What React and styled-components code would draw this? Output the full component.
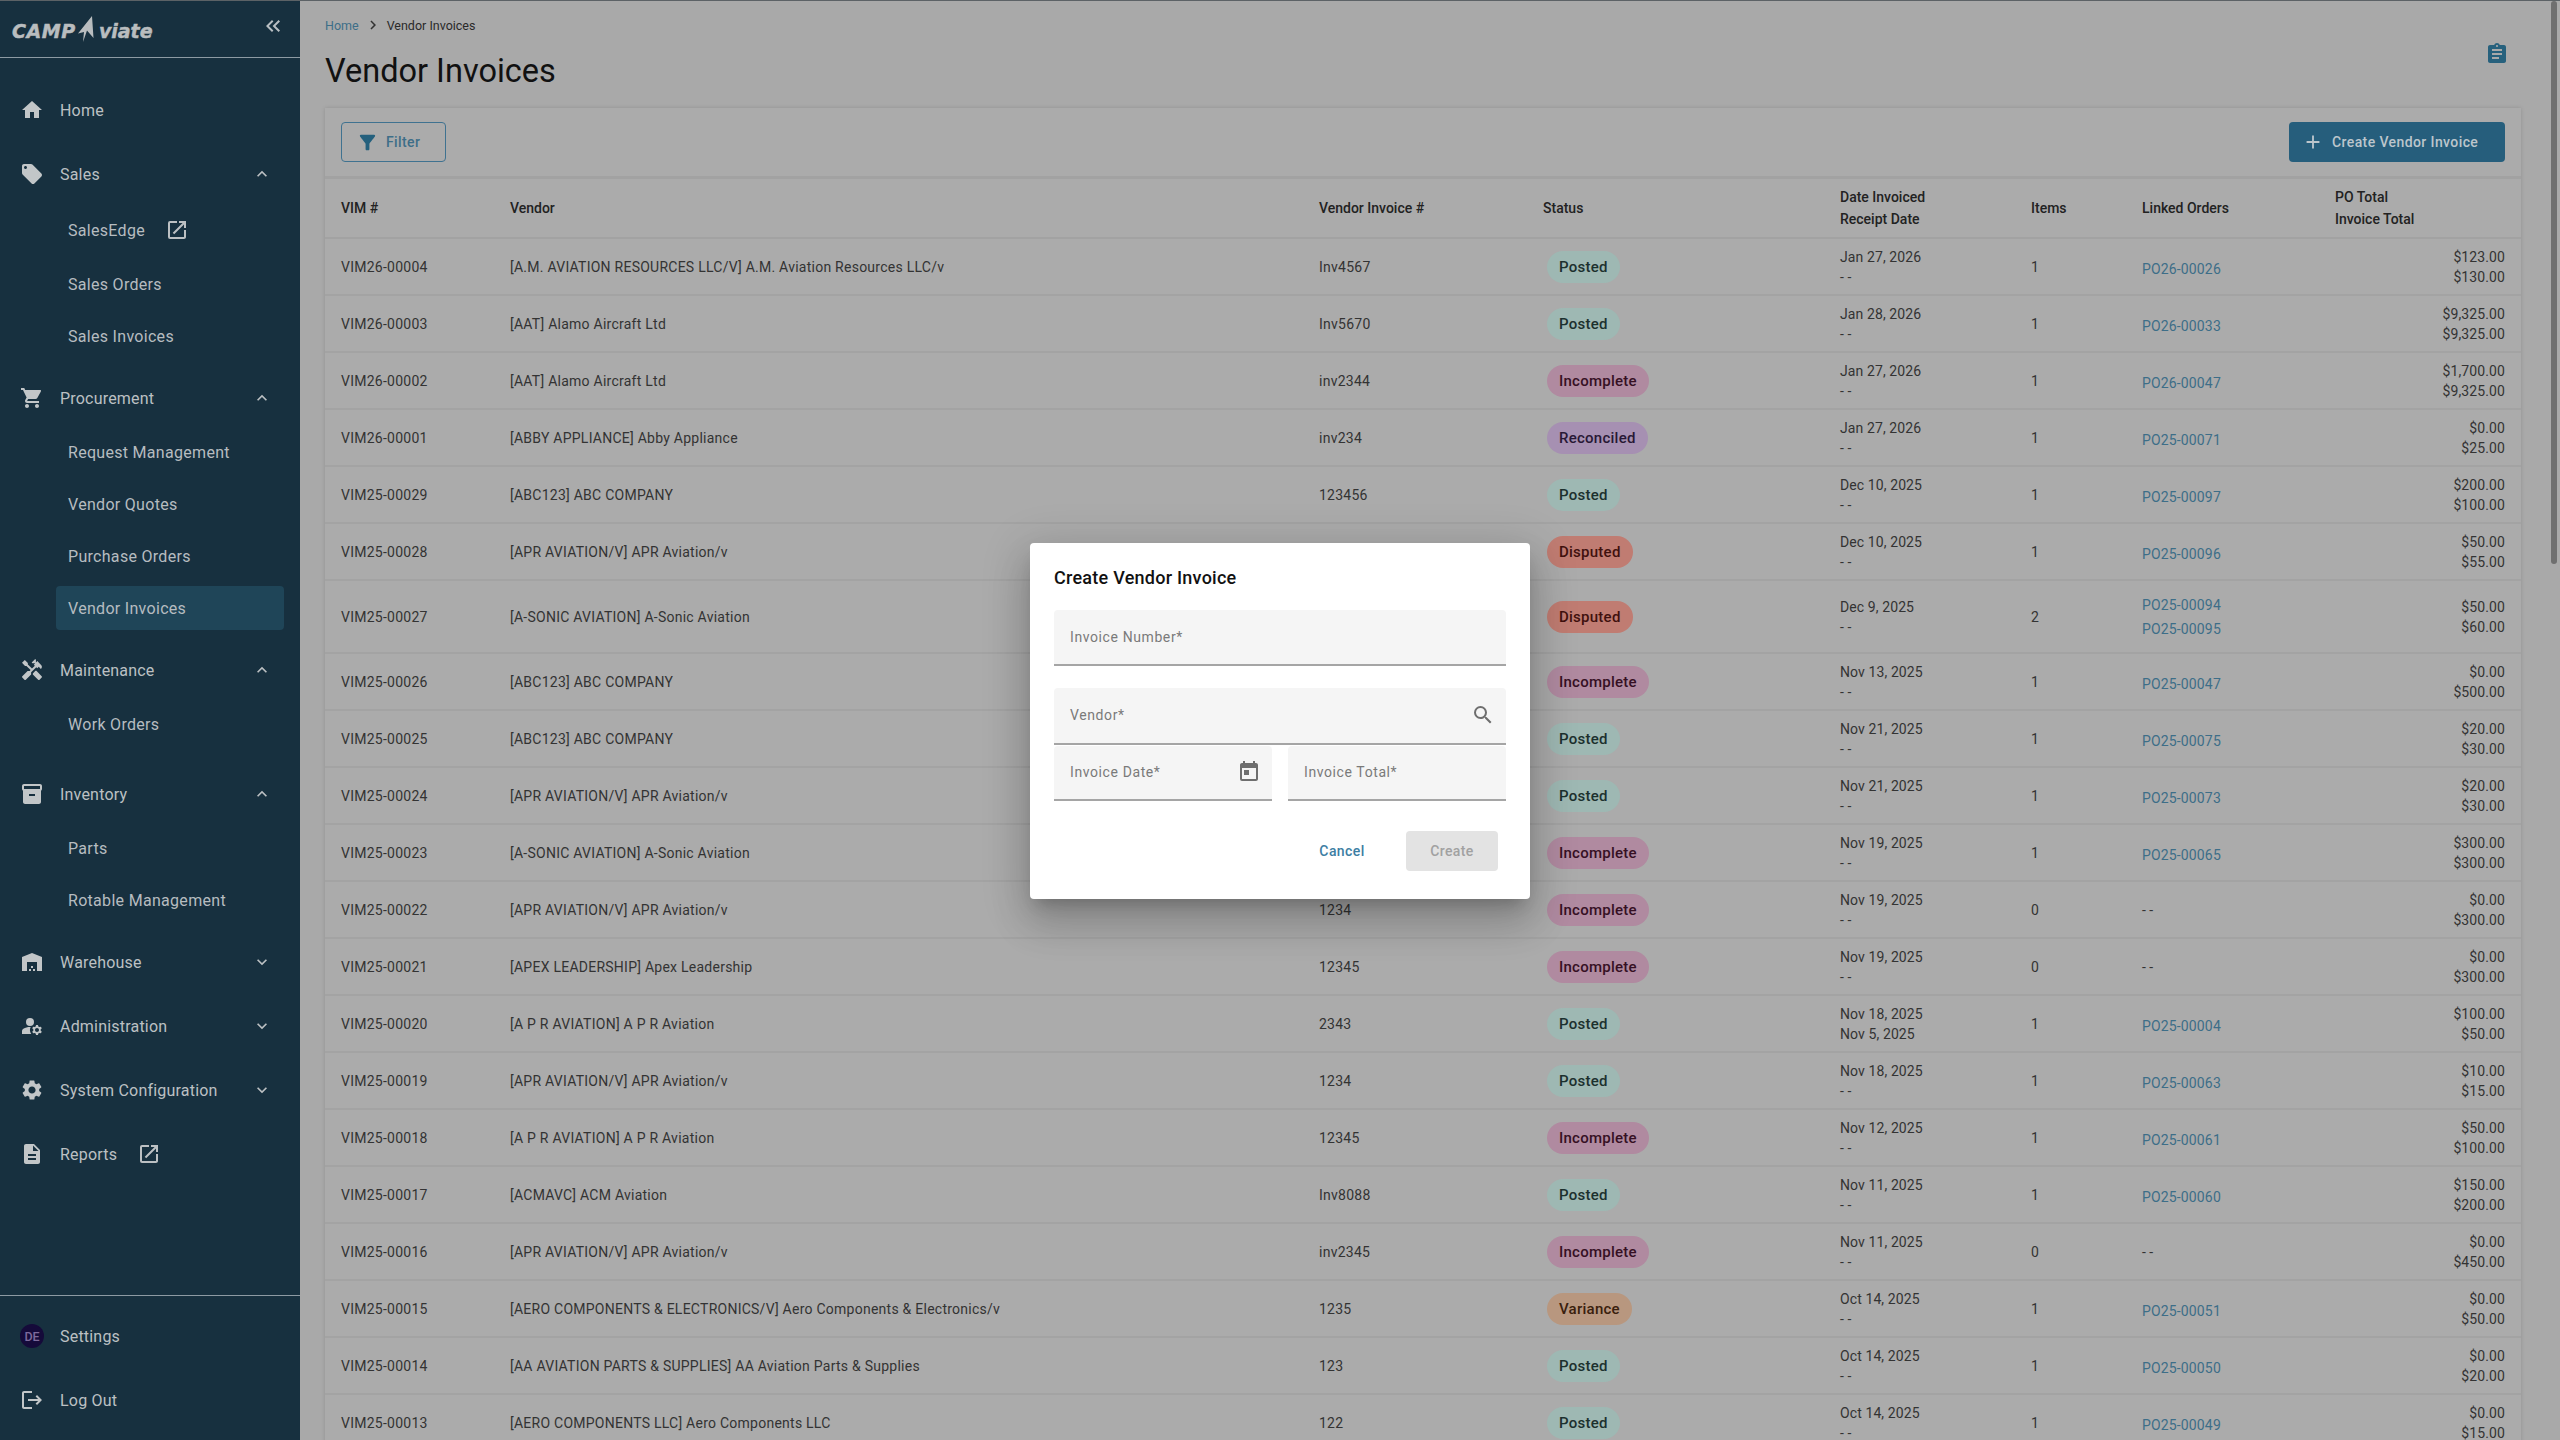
import React from "react";
import styled, { createGlobalStyle } from "styled-components";
import {
  MdHome,
  MdLocalOffer,
  MdShoppingCart,
  MdHandyman,
  MdInventory2,
  MdWarehouse,
  MdManageAccounts,
  MdSettings,
  MdDescription,
  MdLogout,
  MdOpenInNew,
  MdExpandLess,
  MdExpandMore,
  MdKeyboardDoubleArrowLeft,
  MdFilterAlt,
  MdAdd,
  MdSearch,
  MdToday,
  MdAssignment,
  MdChevronRight,
} from "react-icons/md";

const NAV = [
  { label: "Home", icon: MdHome },
  {
    label: "Sales",
    icon: MdLocalOffer,
    open: true,
    children: [{ label: "SalesEdge", external: true }, { label: "Sales Orders" }, { label: "Sales Invoices" }],
  },
  {
    label: "Procurement",
    icon: MdShoppingCart,
    open: true,
    children: [
      { label: "Request Management" },
      { label: "Vendor Quotes" },
      { label: "Purchase Orders" },
      { label: "Vendor Invoices", active: true },
    ],
  },
  { label: "Maintenance", icon: MdHandyman, open: true, tail: 8, children: [{ label: "Work Orders" }] },
  {
    label: "Inventory",
    icon: MdInventory2,
    open: true,
    children: [{ label: "Parts" }, { label: "Rotable Management" }],
  },
  { label: "Warehouse", icon: MdWarehouse, open: false },
  { label: "Administration", icon: MdManageAccounts, open: false },
  { label: "System Configuration", icon: MdSettings, open: false },
  { label: "Reports", icon: MdDescription, external: true },
];

// vendor invoice numbers of the rows behind the dialog are left blank
const ROWS = [
  ["VIM26-00004", "[A.M. AVIATION RESOURCES LLC/V] A.M. Aviation Resources LLC/v", "Inv4567", "Posted", "Jan 27, 2026", "- -", 1, ["PO26-00026"], "$123.00", "$130.00"],
  ["VIM26-00003", "[AAT] Alamo Aircraft Ltd", "Inv5670", "Posted", "Jan 28, 2026", "- -", 1, ["PO26-00033"], "$9,325.00", "$9,325.00"],
  ["VIM26-00002", "[AAT] Alamo Aircraft Ltd", "inv2344", "Incomplete", "Jan 27, 2026", "- -", 1, ["PO26-00047"], "$1,700.00", "$9,325.00"],
  ["VIM26-00001", "[ABBY APPLIANCE] Abby Appliance", "inv234", "Reconciled", "Jan 27, 2026", "- -", 1, ["PO25-00071"], "$0.00", "$25.00"],
  ["VIM25-00029", "[ABC123] ABC COMPANY", "123456", "Posted", "Dec 10, 2025", "- -", 1, ["PO25-00097"], "$200.00", "$100.00"],
  ["VIM25-00028", "[APR AVIATION/V] APR Aviation/v", "", "Disputed", "Dec 10, 2025", "- -", 1, ["PO25-00096"], "$50.00", "$55.00"],
  ["VIM25-00027", "[A-SONIC AVIATION] A-Sonic Aviation", "", "Disputed", "Dec 9, 2025", "- -", 2, ["PO25-00094", "PO25-00095"], "$50.00", "$60.00"],
  ["VIM25-00026", "[ABC123] ABC COMPANY", "", "Incomplete", "Nov 13, 2025", "- -", 1, ["PO25-00047"], "$0.00", "$500.00"],
  ["VIM25-00025", "[ABC123] ABC COMPANY", "", "Posted", "Nov 21, 2025", "- -", 1, ["PO25-00075"], "$20.00", "$30.00"],
  ["VIM25-00024", "[APR AVIATION/V] APR Aviation/v", "", "Posted", "Nov 21, 2025", "- -", 1, ["PO25-00073"], "$20.00", "$30.00"],
  ["VIM25-00023", "[A-SONIC AVIATION] A-Sonic Aviation", "", "Incomplete", "Nov 19, 2025", "- -", 1, ["PO25-00065"], "$300.00", "$300.00"],
  ["VIM25-00022", "[APR AVIATION/V] APR Aviation/v", "1234", "Incomplete", "Nov 19, 2025", "- -", 0, [], "$0.00", "$300.00"],
  ["VIM25-00021", "[APEX LEADERSHIP] Apex Leadership", "12345", "Incomplete", "Nov 19, 2025", "- -", 0, [], "$0.00", "$300.00"],
  ["VIM25-00020", "[A P R AVIATION] A P R Aviation", "2343", "Posted", "Nov 18, 2025", "Nov 5, 2025", 1, ["PO25-00004"], "$100.00", "$50.00"],
  ["VIM25-00019", "[APR AVIATION/V] APR Aviation/v", "1234", "Posted", "Nov 18, 2025", "- -", 1, ["PO25-00063"], "$10.00", "$15.00"],
  ["VIM25-00018", "[A P R AVIATION] A P R Aviation", "12345", "Incomplete", "Nov 12, 2025", "- -", 1, ["PO25-00061"], "$50.00", "$100.00"],
  ["VIM25-00017", "[ACMAVC] ACM Aviation", "Inv8088", "Posted", "Nov 11, 2025", "- -", 1, ["PO25-00060"], "$150.00", "$200.00"],
  ["VIM25-00016", "[APR AVIATION/V] APR Aviation/v", "inv2345", "Incomplete", "Nov 11, 2025", "- -", 0, [], "$0.00", "$450.00"],
  ["VIM25-00015", "[AERO COMPONENTS & ELECTRONICS/V] Aero Components & Electronics/v", "1235", "Variance", "Oct 14, 2025", "- -", 1, ["PO25-00051"], "$0.00", "$50.00"],
  ["VIM25-00014", "[AA AVIATION PARTS & SUPPLIES] AA Aviation Parts & Supplies", "123", "Posted", "Oct 14, 2025", "- -", 1, ["PO25-00050"], "$0.00", "$20.00"],
  ["VIM25-00013", "[AERO COMPONENTS LLC] Aero Components LLC", "122", "Posted", "Oct 14, 2025", "- -", 1, ["PO25-00049"], "$0.00", "$15.00"],
];

const STATUS_COLORS = {
  Posted: ["#9eb8b3", "#1c302e"],
  Incomplete: ["#b08aa0", "#361024"],
  Reconciled: ["#a690b2", "#281835"],
  Disputed: ["#c07c72", "#40110e"],
  Variance: ["#b8977f", "#3a200d"],
};

const App = () => {
  return (
    <>
      <GlobalStyle />
      <Page>
        <SideBar>
          <LogoBar>
            <Logo>
              <LogoText>CAMP</LogoText>
              <LogoPeak viewBox="0 0 22 26">
                <path d="M15 0 L16.5 22 L10 14.5 L6 26 L7 16 L1 17.5 Z" fill="#b9bdbf" />
              </LogoPeak>
              <LogoText $tight>viate</LogoText>
            </Logo>
            <CollapseIcon />
          </LogoBar>
          <NavList>
            {NAV.map((item) => (
              <NavGroup key={item.label} $tail={item.tail}>
                <NavItem>
                  <NavIcon>
                    <item.icon />
                  </NavIcon>
                  <NavLabel>{item.label}</NavLabel>
                  {item.external && <ExternalIcon />}
                  {item.open === true && <Chevron><MdExpandLess /></Chevron>}
                  {item.open === false && <Chevron><MdExpandMore /></Chevron>}
                </NavItem>
                {item.children && (
                  <SubList>
                    {item.children.map((child) => (
                      <SubItem key={child.label} $active={child.active} $external={child.external}>
                        {child.label}
                        {child.external && <ExternalIcon />}
                      </SubItem>
                    ))}
                  </SubList>
                )}
              </NavGroup>
            ))}
          </NavList>
          <SideFooter>
            <NavItem>
              <NavIcon>
                <Avatar>DE</Avatar>
              </NavIcon>
              <NavLabel>Settings</NavLabel>
            </NavItem>
            <NavItem>
              <NavIcon>
                <MdLogout />
              </NavIcon>
              <NavLabel>Log Out</NavLabel>
            </NavItem>
          </SideFooter>
        </SideBar>

        <Main>
          <Breadcrumbs>
            <CrumbLink>Home</CrumbLink>
            <CrumbSep />
            <span>Vendor Invoices</span>
          </Breadcrumbs>
          <TitleRow>
            <Title>Vendor Invoices</Title>
            <NotesIcon />
          </TitleRow>
          <Card>
            <Toolbar>
              <FilterButton>
                <MdFilterAlt />
                Filter
              </FilterButton>
              <CreateButton>
                <MdAdd />
                Create Vendor Invoice
              </CreateButton>
            </Toolbar>
            <HeadRow>
              <div>VIM #</div>
              <div>Vendor</div>
              <div>Vendor Invoice #</div>
              <div>Status</div>
              <HeadStack>
                <div>Date Invoiced</div>
                <div>Receipt Date</div>
              </HeadStack>
              <div>Items</div>
              <div>Linked Orders</div>
              <HeadStack>
                <div>PO Total</div>
                <div>Invoice Total</div>
              </HeadStack>
            </HeadRow>
            {ROWS.map((r) => (
              <Row key={r[0]} $tall={r[7].length > 1}>
                <RowText>{r[0]}</RowText>
                <RowText>{r[1]}</RowText>
                <RowText>{r[2]}</RowText>
                <div>
                  <Badge $status={r[3]}>{r[3]}</Badge>
                </div>
                <Stack>
                  <div>{r[4]}</div>
                  <div>{r[5]}</div>
                </Stack>
                <div>{r[6]}</div>
                {r[7].length ? (
                  <Links $count={r[7].length}>
                    {r[7].map((po) => (
                      <PoLink key={po}>{po}</PoLink>
                    ))}
                  </Links>
                ) : (
                  <div>- -</div>
                )}
                <Amounts>
                  <div>{r[8]}</div>
                  <div>{r[9]}</div>
                </Amounts>
              </Row>
            ))}
          </Card>
        </Main>
        <ScrollThumb />

        <ModalLayer>
          <Dialog>
            <DialogTitle>Create Vendor Invoice</DialogTitle>
            <Field $height={56}>
              <FieldLabel>Invoice Number*</FieldLabel>
            </Field>
            <Field $height={57} $top={22}>
              <FieldLabel>Vendor*</FieldLabel>
              <FieldIcon>
                <MdSearch />
              </FieldIcon>
            </Field>
            <FieldPair>
              <Field $height={55}>
                <FieldLabel>Invoice Date*</FieldLabel>
                <FieldIcon>
                  <MdToday />
                </FieldIcon>
              </Field>
              <Field $height={55}>
                <FieldLabel>Invoice Total*</FieldLabel>
              </Field>
            </FieldPair>
            <DialogActions>
              <CancelButton>Cancel</CancelButton>
              <SubmitButton>Create</SubmitButton>
            </DialogActions>
          </Dialog>
        </ModalLayer>
      </Page>
    </>
  );
};

const GlobalStyle = createGlobalStyle`
  html, body {
    margin: 0;
    padding: 0;
    height: 100%;
    background: #a9a9a9;
    font-family: Roboto, "Liberation Sans", sans-serif;
  }
  * { box-sizing: border-box; }
`;

const Page = styled.div`
  position: relative;
  display: flex;
  width: 2560px;
  height: 1440px;
  overflow: hidden;
  background: #a9a9a9;
  border-top: 1px solid #5c6266;
`;

const SideBar = styled.aside`
  flex: 0 0 300px;
  display: flex;
  flex-direction: column;
  background: #17303f;
  color: #bcc0c3;
`;

const LogoBar = styled.div`
  height: 57px;
  flex: none;
  display: flex;
  align-items: center;
  justify-content: space-between;
  padding: 0 15px 0 12px;
  border-bottom: 1px solid #8d9aa3;
`;

const Logo = styled.div`
  display: flex;
  align-items: center;
`;

const LogoText = styled.span`
  font-family: "DejaVu Sans", sans-serif;
  font-weight: 700;
  font-style: italic;
  font-size: 19px;
  letter-spacing: ${(p) => (p.$tight ? "0" : "0.6px")};
  color: #b9bdbf;
  -webkit-text-stroke: 0.5px #b9bdbf;
  margin-top: 3px;
`;

const LogoPeak = styled.svg`
  width: 22px;
  height: 26px;
  margin-left: 1px;
`;

const CollapseIcon = styled(MdKeyboardDoubleArrowLeft)`
  font-size: 24px;
  color: #b9bfc3;
  margin-top: -6px;
`;

const NavList = styled.nav`
  flex: 1;
  padding-top: 20px;
`;

const NavGroup = styled.div`
  padding-bottom: ${(p) => p.$tail || 0}px;
`;

const NavItem = styled.div`
  height: 64px;
  display: flex;
  align-items: center;
  padding: 0 20px;
  font-size: 16px;
  letter-spacing: 0.2px;
  color: #bcc0c3;
`;

const NavIcon = styled.span`
  flex: 0 0 24px;
  height: 24px;
  display: flex;
  align-items: center;
  justify-content: center;
  margin-right: 16px;
  font-size: 24px;
  color: #c2c6c8;
`;

const NavLabel = styled.span`
  white-space: nowrap;
`;

const Chevron = styled.span`
  margin-left: auto;
  margin-right: 8px;
  display: flex;
  font-size: 20px;
  color: #bcc0c3;
`;

const ExternalIcon = styled(MdOpenInNew)`
  font-size: 24px;
  margin-left: 20px;
  color: #bcc0c3;
`;

const SubList = styled.div`
  margin-top: -4px;
  padding: 0 16px 4px 56px;
`;

const SubItem = styled.div`
  height: ${(p) => (p.$active ? 44 : p.$external ? 56 : 52)}px;
  margin: ${(p) => (p.$active ? "4px 0" : 0)};
  display: flex;
  align-items: center;
  padding-left: 12px;
  border-radius: 4px;
  font-size: 16px;
  letter-spacing: 0.3px;
  color: #b6bcc0;
  background: ${(p) => (p.$active ? "#1f4558" : "transparent")};
`;

const SideFooter = styled.div`
  flex: none;
  padding: 8px 0;
  border-top: 1px solid #8d9aa3;
`;

const Avatar = styled.span`
  width: 24px;
  height: 24px;
  border-radius: 50%;
  background: #150a3a;
  color: #7d6a9c;
  display: flex;
  align-items: center;
  justify-content: center;
  font-size: 12.5px;
  font-weight: 500;
  letter-spacing: 0;
`;

const Main = styled.main`
  flex: 1;
  min-width: 0;
  padding: 0 39px 0 25px;
`;

const Breadcrumbs = styled.div`
  height: 48px;
  display: flex;
  align-items: center;
  font-size: 12.5px;
  color: #2a2a2a;
`;

const CrumbLink = styled.a`
  color: #3d6e88;
`;

const CrumbSep = styled(MdChevronRight)`
  font-size: 18px;
  margin: 0 5px;
  color: #333;
`;

const TitleRow = styled.div`
  height: 44px;
  display: flex;
  align-items: center;
  justify-content: space-between;
`;

const Title = styled.h1`
  margin: 0;
  font-size: 32.5px;
  font-weight: 400;
  color: #111;
`;

const NotesIcon = styled(MdAssignment)`
  font-size: 24px;
  color: #27617d;
  margin: -34px 12px 0 0;
`;

const Card = styled.section`
  margin-top: 15px;
  background: #ababab;
  box-shadow: 0 0 4px rgba(0, 0, 0, 0.14);
`;

const Toolbar = styled.div`
  height: 71px;
  display: flex;
  align-items: center;
  justify-content: space-between;
  padding: 0 16px;
  border-bottom: 3px solid #a2a2a2;
`;

const FilterButton = styled.button`
  width: 105px;
  height: 40px;
  display: flex;
  align-items: center;
  gap: 7px;
  padding: 0 14px;
  background: transparent;
  border: 1px solid #3f7290;
  border-radius: 4px;
  font-family: inherit;
  font-size: 14px;
  font-weight: 500;
  letter-spacing: 0.4px;
  color: #3d6e88;

  svg {
    font-size: 23px;
    color: #24607d;
  }
`;

const CreateButton = styled.button`
  width: 216px;
  height: 40px;
  display: flex;
  align-items: center;
  gap: 8px;
  padding: 0 13px;
  background: #265e7c;
  border: none;
  border-radius: 4px;
  font-family: inherit;
  font-size: 14px;
  font-weight: 500;
  letter-spacing: 0.4px;
  color: #bcc6cc;

  svg {
    font-size: 22px;
  }
`;

const columns = "169px 809px 224px 297px 191px 111px 193px 1fr";

const HeadRow = styled.div`
  display: grid;
  grid-template-columns: ${columns};
  align-items: center;
  height: 60px;
  padding: 0 16px 1px;
  font-size: 14px;
  font-weight: 500;
  color: #222;
  border-bottom: 2px solid #a2a2a2;
`;

const HeadStack = styled.div`
  line-height: 22px;
`;

const Row = styled.div`
  display: grid;
  grid-template-columns: ${columns};
  align-items: center;
  height: ${(p) => (p.$tall ? 73 : 57)}px;
  padding: 0 16px;
  font-size: 14px;
  color: #333;
  border-bottom: 2px solid #a3a3a3;
`;

const RowText = styled.div`
  letter-spacing: 0.25px;
`;

const Stack = styled.div`
  line-height: 20px;
  letter-spacing: 0.1px;
`;

const Amounts = styled(Stack)`
  text-align: right;
`;

const Links = styled.div`
  display: flex;
  flex-direction: column;
  gap: 4px;
  padding-top: ${(p) => (p.$count > 1 ? 0 : 4)}px;
`;

const PoLink = styled.a`
  color: #3d6e88;
  line-height: 20px;
  letter-spacing: 0.15px;
`;

const Badge = styled.span`
  display: inline-flex;
  align-items: center;
  height: 32px;
  margin-left: 4px;
  padding: 0 12px;
  border-radius: 16px;
  font-size: 15px;
  font-weight: 500;
  letter-spacing: 0.25px;
  background: ${(p) => STATUS_COLORS[p.$status][0]};
  color: ${(p) => STATUS_COLORS[p.$status][1]};
`;

const ScrollThumb = styled.div`
  position: absolute;
  top: 0;
  right: 3px;
  width: 6px;
  height: 563px;
  border-radius: 3px;
  background: #6f6f6f;
`;

const ModalLayer = styled.div`
  position: absolute;
  inset: 0;
  display: flex;
  align-items: center;
  justify-content: center;
`;

const Dialog = styled.div`
  width: 500px;
  height: 356px;
  padding: 24px;
  background: #fff;
  border-radius: 4px;
  box-shadow: 0 11px 15px -7px rgba(0, 0, 0, 0.2), 0 24px 38px 3px rgba(0, 0, 0, 0.14), 0 9px 46px 8px rgba(0, 0, 0, 0.12);
`;

const DialogTitle = styled.h2`
  margin: 0 0 21px;
  height: 22px;
  line-height: 22px;
  font-size: 18px;
  font-weight: 500;
  letter-spacing: 0.25px;
  color: #111;
`;

const Field = styled.div`
  height: ${(p) => p.$height}px;
  margin-top: ${(p) => p.$top || 0}px;
  display: flex;
  align-items: center;
  justify-content: space-between;
  padding: 0 11px 0 16px;
  background: #f5f5f5;
  border-radius: 4px 4px 0 0;
  border-bottom: 2px solid #a5a5a5;
`;

const FieldLabel = styled.span`
  font-size: 14px;
  letter-spacing: 0.6px;
  color: #7a7a7a;
`;

const FieldIcon = styled.span`
  display: flex;
  font-size: 24px;
  color: #6e6e6e;
`;

const FieldPair = styled.div`
  display: grid;
  grid-template-columns: 1fr 1fr;
  gap: 16px;
  margin-top: 1px;
`;

const DialogActions = styled.div`
  display: flex;
  align-items: center;
  justify-content: flex-end;
  gap: 26px;
  margin: 30px 8px 0 0;
`;

const CancelButton = styled.button`
  width: 76px;
  height: 40px;
  background: none;
  border: none;
  font-family: inherit;
  font-size: 14px;
  font-weight: 500;
  letter-spacing: 0.4px;
  color: #3d7ea3;
`;

const SubmitButton = styled.button`
  width: 92px;
  height: 40px;
  background: #e3e3e3;
  border: none;
  border-radius: 4px;
  font-family: inherit;
  font-size: 14px;
  font-weight: 500;
  letter-spacing: 0.4px;
  color: #a1a1a1;
`;

export default App;
